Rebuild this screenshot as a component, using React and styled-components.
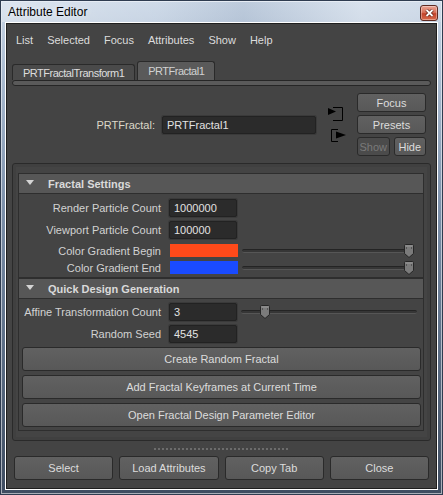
import React from "react";
import styled, { createGlobalStyle } from "styled-components";

const font = `"Liberation Sans", Arial, sans-serif`;

const GlobalStyle = createGlobalStyle`
  html, body {
    margin: 0;
    padding: 0;
    background: #fff;
  }
  body {
    font-family: ${font};
  }
`;

const menuItems = ["List", "Selected", "Focus", "Attributes", "Show", "Help"];

const Slider = ({ value, right }) => (
  <SliderBox right={right}>
    <Track />
    <Thumb style={{ left: `calc(${value} * (100% - 10px))` }}>
      <svg width="10" height="14" viewBox="0 0 10 14">
        <path
          d="M0.5 1.5 Q0.5 0.5 1.5 0.5 H8.5 Q9.5 0.5 9.5 1.5 V9.5 L5 13.5 L0.5 9.5 Z"
          fill="#7b7b7b"
          stroke="#262626"
        />
        <path d="M1.5 2 H8.5" stroke="#9a9a9a" />
        <path d="M2.5 3 V5 M7.5 3 V5" stroke="#555" />
      </svg>
    </Thumb>
  </SliderBox>
);

const App = () => {
  return (
    <>
      <GlobalStyle />
      <Window>
        <TitleBar>
          <Title>Attribute Editor</Title>
          <CloseBtn>
            <svg width="9" height="8" viewBox="0 0 9 8">
              <path d="M1.5 1 L7.5 7 M7.5 1 L1.5 7" stroke="#5a1c12" strokeWidth="3.2" />
              <path d="M1.5 1 L7.5 7 M7.5 1 L1.5 7" stroke="#fff" strokeWidth="1.8" />
            </svg>
          </CloseBtn>
        </TitleBar>

        <Client>
          <ClientInner>
            <MenuBar>
              {menuItems.map((m) => (
                <MenuItem key={m}>{m}</MenuItem>
              ))}
            </MenuBar>

            <TabStrip>
              <Tab>PRTFractalTransform1</Tab>
              <Tab active>PRTFractal1</Tab>
            </TabStrip>
            <TabBar />

            <HeaderRow>
              <NodeLabel>PRTFractal:</NodeLabel>
              <NameInput>PRTFractal1</NameInput>
              <IconColumn>
                <svg width="19" height="14" viewBox="0 0 19 14">
                  <polyline points="5,0.5 14.5,0.5 14.5,13.5 5,13.5" fill="none" stroke="#000" />
                  <polygon points="0,1 8,4.5 0,8" fill="#000" />
                </svg>
                <svg width="19" height="14" viewBox="0 0 19 14">
                  <polyline points="10,0.5 3.5,0.5 3.5,12.5 10,12.5" fill="none" stroke="#000" />
                  <polygon points="8,2.5 18,6 8,9.5" fill="#000" />
                </svg>
              </IconColumn>
              <SideButtons>
                <SmallButton>Focus</SmallButton>
                <SmallButton>Presets</SmallButton>
                <PairRow>
                  <SmallButton disabled grow>Show</SmallButton>
                  <SmallButton grow>Hide</SmallButton>
                </PairRow>
              </SideButtons>
            </HeaderRow>

            <ScrollPanel>
              <Frame>
                <FrameHeader>
                  <Arrow />
                  Fractal Settings
                </FrameHeader>
                <FrameBody pad="3px 0 1px">
                  <Row h={22}>
                    <RowLabel>Render Particle Count</RowLabel>
                    <Field>1000000</Field>
                  </Row>
                  <Row h={22}>
                    <RowLabel>Viewport Particle Count</RowLabel>
                    <Field>100000</Field>
                  </Row>
                  <Row h={17} top={1}>
                    <RowLabel>Color Gradient Begin</RowLabel>
                    <Swatch color="#ff4a1a" />
                    <Slider value={1} right={9} />
                  </Row>
                  <Row h={17}>
                    <RowLabel>Color Gradient End</RowLabel>
                    <Swatch color="#1a4bff" />
                    <Slider value={1} right={9} />
                  </Row>
                </FrameBody>
              </Frame>

              <Frame>
                <FrameHeader>
                  <Arrow />
                  Quick Design Generation
                </FrameHeader>
                <FrameBody pad="2px 0 3px">
                  <Row h={22}>
                    <RowLabel>Affine Transformation Count</RowLabel>
                    <Field>3</Field>
                    <Slider value={0.115} right={6} />
                  </Row>
                  <Row h={22}>
                    <RowLabel>Random Seed</RowLabel>
                    <Field>4545</Field>
                  </Row>
                  <ActionStack>
                    <WideButton>Create Random Fractal</WideButton>
                    <WideButton>Add Fractal Keyframes at Current Time</WideButton>
                    <WideButton>Open Fractal Design Parameter Editor</WideButton>
                  </ActionStack>
                </FrameBody>
              </Frame>
            </ScrollPanel>

            <Splitter>
              <Dots />
            </Splitter>

            <BottomBar>
              <WideButton>Select</WideButton>
              <WideButton>Load Attributes</WideButton>
              <WideButton>Copy Tab</WideButton>
              <WideButton>Close</WideButton>
            </BottomBar>
          </ClientInner>
        </Client>
      </Window>
    </>
  );
};

export default App;

//window chrome
const Window = styled.div`
  width: 443px;
  height: 495px;
  box-sizing: border-box;
  display: flex;
  flex-direction: column;
  background: linear-gradient(
    180deg,
    #c9d6e6 0%,
    #a5b7cd 18%,
    #7c90aa 42%,
    #5a6c84 72%,
    #3e4c60 100%
  );
  box-shadow: inset 0 0 0 1px #2f3c50, inset 0 0 0 2px rgba(255, 255, 255, 0.55);
`;

const TitleBar = styled.div`
  height: 20px;
  margin: 2px 2px 0;
  padding: 0 3px 0 6px;
  display: flex;
  align-items: flex-start;
  flex-shrink: 0;
  background: linear-gradient(
    90deg,
    rgba(255, 255, 255, 0.35) 0%,
    rgba(255, 255, 255, 0.12) 35%,
    rgba(60, 80, 110, 0.08) 55%,
    rgba(255, 255, 255, 0.3) 82%,
    rgba(255, 255, 255, 0.15) 100%
  );
`;

const Title = styled.div`
  flex: 1;
  font-size: 12px;
  line-height: 20px;
  color: #000;
  text-shadow: 0 0 6px rgba(255, 255, 255, 0.9);
`;

const CloseBtn = styled.div`
  width: 18px;
  height: 16px;
  margin-top: 3px;
  box-sizing: border-box;
  border: 1px solid #5e2a22;
  border-radius: 3px;
  background: linear-gradient(180deg, #eba494 0%, #d9735c 45%, #c2432b 55%, #d86a4c 100%);
  box-shadow: inset 0 0 0 1px rgba(255, 255, 255, 0.35);
  display: flex;
  align-items: center;
  justify-content: center;
`;

const Client = styled.div`
  flex: 1;
  margin: 0 5px 5px;
  border: 1px solid #fff;
  display: flex;
  min-height: 0;
`;

const ClientInner = styled.div`
  flex: 1;
  border: 1px solid #1f1f1f;
  background: #444444;
  display: flex;
  flex-direction: column;
  font-size: 11px;
  color: #d6d6d6;
`;

//menu + tabs
const MenuBar = styled.div`
  height: 32px;
  flex-shrink: 0;
  display: flex;
  align-items: center;
  gap: 14px;
  padding-left: 9px;
  color: #dcdcdc;
`;

const MenuItem = styled.span``;

const TabStrip = styled.div`
  height: 19px;
  margin-top: 5px;
  padding-left: 5px;
  display: flex;
  align-items: flex-end;
  gap: 2px;
  flex-shrink: 0;
`;

const Tab = styled.div`
  height: ${(p) => (p.active ? "19px" : "16px")};
  box-sizing: border-box;
  padding: 0 10px;
  border: 1px solid #2a2a2a;
  border-bottom: none;
  border-radius: 3px 3px 0 0;
  background: ${(p) => (p.active ? "#5a5a5a" : "#4a4a4a")};
  color: ${(p) => (p.active ? "#d2d2d2" : "#dedede")};
  letter-spacing: -0.5px;
  line-height: ${(p) => (p.active ? "18px" : "16px")};
`;

const TabBar = styled.div`
  height: 6px;
  margin: 0 5px;
  box-sizing: border-box;
  border: 1px solid #262626;
  border-radius: 3px;
  background: #5a5a5a;
  flex-shrink: 0;
`;

//node header
const HeaderRow = styled.div`
  display: flex;
  align-items: center;
  padding: 7px 10px 0 0;
  flex-shrink: 0;
`;

const NodeLabel = styled.div`
  flex: 1;
  text-align: right;
  padding-right: 7px;
  color: #dcd8c8;
`;

const Field = styled.div`
  width: 68px;
  height: 18px;
  box-sizing: border-box;
  padding-left: 4px;
  background: #2b2b2b;
  border: 1px solid #222;
  border-radius: 2px;
  box-shadow: 0 0 0 1px #3a3a3a;
  color: #e2e2e2;
  line-height: 17px;
  flex-shrink: 0;
`;

const NameInput = styled(Field)`
  width: 154px;
`;

const IconColumn = styled.div`
  display: flex;
  flex-direction: column;
  gap: 8px;
  margin: 0 10px 0 12px;
`;

const SideButtons = styled.div`
  width: 69px;
  display: flex;
  flex-direction: column;
  gap: 3px;
`;

const PairRow = styled.div`
  display: flex;
  gap: 4px;
`;

const ButtonBase = styled.div`
  box-sizing: border-box;
  display: flex;
  align-items: center;
  justify-content: center;
  border: 1px solid #2a2a2a;
  border-radius: 3px;
  background: linear-gradient(180deg, #616161, #585858);
  color: #dcdcdc;
  white-space: nowrap;
  flex-shrink: 0;
`;

const SmallButton = styled(ButtonBase)`
  flex: ${(p) => (p.grow ? 1 : "none")};
  height: 19px;
  color: ${(p) => (p.disabled ? "#7a7a7a" : "#dcdcdc")};
  background: ${(p) => (p.disabled ? "#4b4b4b" : "linear-gradient(180deg, #616161, #585858)")};
`;

const WideButton = styled(ButtonBase)`
  height: 24px;
`;

//scroll panel + frames
const ScrollPanel = styled.div`
  margin: 7px 5px 0;
  border: 1px solid #2a2a2a;
  border-radius: 3px;
  padding: 9px 6px 9px 5px;
  box-shadow: inset 0 0 0 3px #404040;
  flex-shrink: 0;
`;

const Frame = styled.div`
  border: 1px solid #2e2e2e;
`;

const FrameHeader = styled.div`
  height: 19px;
  box-sizing: content-box;
  border-bottom: 1px solid #2e2e2e;
  background: #575757;
  display: flex;
  align-items: center;
  padding-left: 7px;
  font-weight: bold;
  color: #dadada;
`;

const Arrow = styled.span`
  width: 0;
  height: 0;
  border-left: 4.5px solid transparent;
  border-right: 4.5px solid transparent;
  border-top: 5px solid #d4d4d4;
  margin: 0 14px 3px 0;
`;

const FrameBody = styled.div`
  padding: ${(p) => p.pad};
`;

const Row = styled.div`
  height: ${(p) => p.h}px;
  margin-top: ${(p) => p.top || 0}px;
  display: flex;
  align-items: center;
`;

const RowLabel = styled.div`
  width: 150px;
  flex-shrink: 0;
  box-sizing: border-box;
  padding-right: 8px;
  text-align: right;
  color: #d2d2d2;
  white-space: nowrap;
`;

const Swatch = styled.div`
  width: 68px;
  height: 13px;
  margin-left: 1px;
  background: ${(p) => p.color};
  flex-shrink: 0;
`;

const SliderBox = styled.div`
  flex: 1;
  height: 14px;
  margin: 0 ${(p) => p.right}px 0 4px;
  position: relative;
  display: flex;
  align-items: center;
`;

const Track = styled.div`
  flex: 1;
  height: 4px;
  box-sizing: border-box;
  border-top: 1px solid #242424;
  border-bottom: 1px solid #565656;
  background: #363636;
  border-radius: 2px;
`;

const Thumb = styled.div`
  position: absolute;
  top: 0;
  width: 10px;
  height: 14px;
  line-height: 0;
`;

const ActionStack = styled.div`
  display: flex;
  flex-direction: column;
  gap: 4px;
  margin: 2px 2px 0 3px;
`;

//footer
const Splitter = styled.div`
  flex: 1;
  display: flex;
  align-items: center;
  justify-content: center;
`;

const Dots = styled.div`
  width: 136px;
  height: 2px;
  background: repeating-linear-gradient(90deg, #6c6c6c 0 2px, transparent 2px 4px);
`;

const BottomBar = styled.div`
  display: grid;
  grid-template-columns: repeat(4, 1fr);
  gap: 6px;
  padding: 0 7px 8px;
`;
